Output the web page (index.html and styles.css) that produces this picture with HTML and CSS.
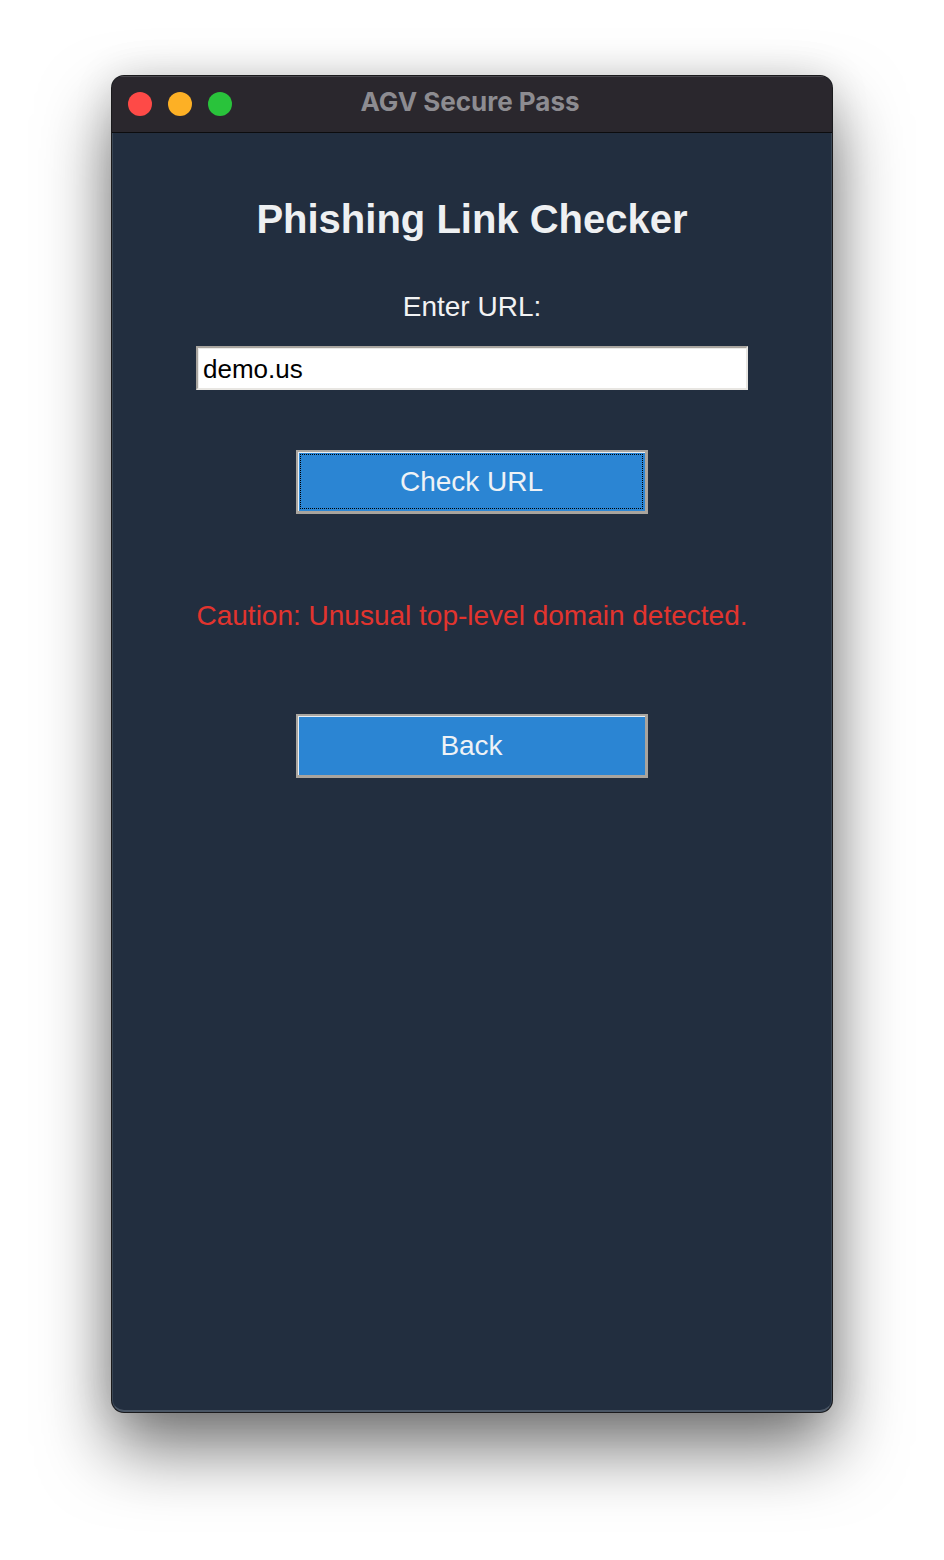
FILE: index.html
```html
<!DOCTYPE html>
<html>
<head>
<meta charset="utf-8">
<link rel="stylesheet" href="styles.css">
</head>
<body>
<div class="stage">
  <div class="window">
    <div class="titlebar">
      <div class="lights">
        <span class="light red"></span>
        <span class="light yellow"></span>
        <span class="light green"></span>
      </div>
      <div class="wtitle">AGV Secure Pass</div>
    </div>
    <div class="content">
      <h1 class="heading">Phishing Link Checker</h1>
      <div class="label">Enter URL:</div>
      <div class="input">demo.us</div>
      <div class="btn focus"><span class="btn-inner">Check URL</span></div>
      <div class="caution">Caution: Unusual top-level domain detected.</div>
      <div class="btn"><span class="btn-inner">Back</span></div>
    </div>
  </div>
</div>
</body>
</html>
```
FILE: styles.css
```css
html, body {
  margin: 0;
  padding: 0;
  background: #ffffff;
  width: 944px;
  height: 1560px;
  overflow: hidden;
  font-family: "Liberation Sans", Arial, sans-serif;
}
.stage {
  width: 944px;
  height: 1560px;
  padding-top: 76px;
  box-sizing: border-box;
  display: flex;
  justify-content: center;
}
.window {
  width: 720px;
  height: 1336px;
  border-radius: 12px;
  background: #222e3f;
  box-shadow: 0 0 0 1px #1a1a1c, 0 36px 70px rgba(0,0,0,0.55), 0 0 40px rgba(0,0,0,0.12);
  overflow: hidden;
  display: flex;
  flex-direction: column;
}
.titlebar {
  height: 57px;
  background: #2a272d;
  border-bottom: 1px solid #0c0c0e;
  box-sizing: border-box;
  position: relative;
  display: flex;
  align-items: center;
  flex-shrink: 0;
  box-shadow: inset 0 1px 0 #4a484e;
}
.lights {
  display: flex;
  gap: 16px;
  padding-left: 16px;
}
.light {
  width: 24px;
  height: 24px;
  border-radius: 50%;
  display: block;
}
.red { background: #fe4a47; }
.yellow { background: #fdb025; }
.green { background: #29c33b; }
.wtitle {
  position: absolute;
  left: 0;
  right: 0;
  top: 0;
  bottom: 0;
  display: flex;
  align-items: center;
  justify-content: center;
  color: #8d8c91;
  font-weight: bold;
  font-size: 26px;
  font-family: "Inter", "Liberation Sans", sans-serif;
  padding-bottom: 5px;
  padding-right: 4px;
}
.content {
  flex: 1;
  display: flex;
  flex-direction: column;
  align-items: center;
  border-left: 1px solid #3a4654;
  border-right: 1px solid #3a4654;
  border-bottom: 2px solid #4a5665;
  border-radius: 0 0 12px 12px;
}
.heading {
  margin: 62px 0 0 0;
  font-size: 40px;
  font-weight: bold;
  color: #eef0f2;
  line-height: 48px;
}
.label {
  margin-top: 47px;
  font-size: 28px;
  color: #f2f3f4;
  line-height: 34px;
}
.input {
  margin-top: 22px;
  width: 552px;
  height: 44px;
  box-sizing: border-box;
  background: #ffffff;
  border-top: 2px solid #a9a59f;
  border-left: 2px solid #a9a59f;
  border-right: 2px solid #e8e6e2;
  border-bottom: 2px solid #e8e6e2;
  box-shadow: inset 1px 1px 0 #ecebe8;
  font-size: 26px;
  color: #000;
  padding-left: 5px;
  line-height: 42px;
}
.btn {
  width: 352px;
  height: 64px;
  box-sizing: border-box;
  background: #2b85d3;
  border-top: 2px solid #aaa6a0;
  border-left: 2px solid #aaa6a0;
  border-right: 3px solid #a9a49d;
  border-bottom: 3px solid #a9a49d;
  box-shadow: inset 1px 1px 0 #e9eef3;
  display: flex;
  padding: 2px;
  margin-top: 60px;
}
.btn-inner {
  flex: 1;
  display: flex;
  align-items: center;
  justify-content: center;
  color: #eef2f6;
  font-size: 28px;
  border: 1px solid transparent;
}
.focus .btn-inner {
  border: 1px dotted #000;
}
.caution {
  margin-top: 86px;
  font-size: 28px;
  color: #e2342e;
  line-height: 32px;
  height: 32px;
  margin-bottom: 22px;
}
.caution + .btn {
  margin-top: 60px;
}
```
